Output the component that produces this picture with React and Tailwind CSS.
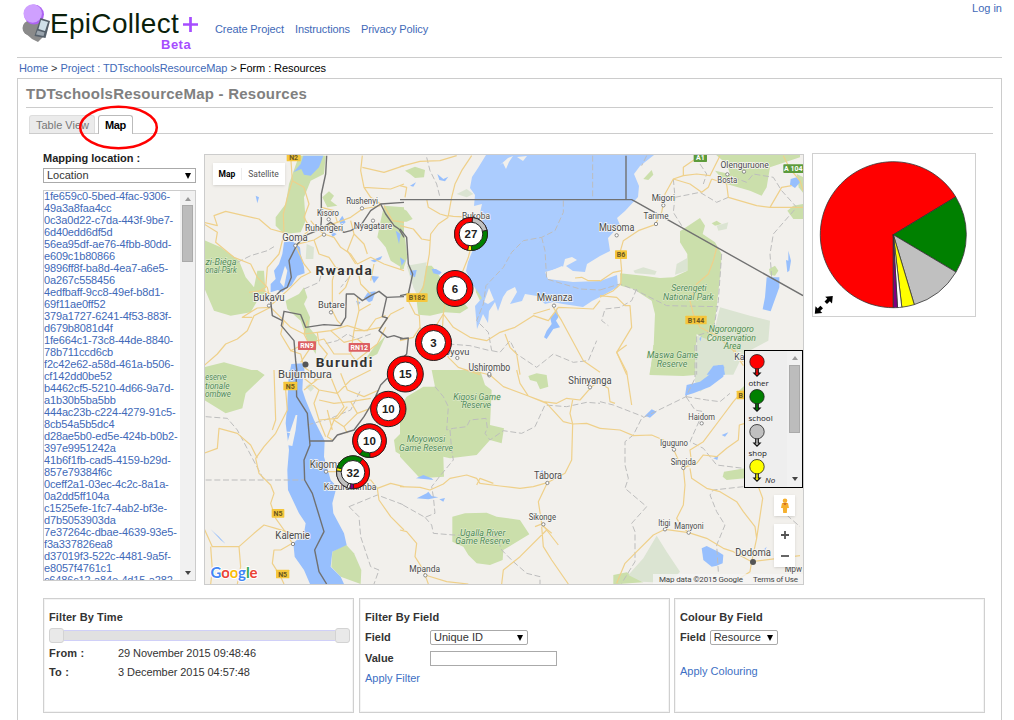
import React from "react";

/* Map artwork: each sheet covers a 200px-wide area, drawn at three units per pixel. */
const SHEETS = [
  {
    x: 204, y: 154,
    parks: [
      "M285 5L365 5L360 60L320 80L300 130L305 200L290 235L240 240L215 215L215 190L245 150L255 90Z",
      "M0 258L50 280L105 320L125 370L150 400L160 350L180 350L185 420L160 440L140 475L80 485L30 470L0 400Z",
      "M355 130L375 112L390 125L380 140L400 155L370 160Z",
      "M540 155L600 160L600 345L560 320L545 280L520 250L530 200Z",
      "M245 440L285 420L300 400L310 430L300 450L318 490L315 520L340 550L335 600L310 560L290 500L250 465Z",
      "M510 580L545 545L520 600L480 620Z",
      "M0 640L60 625L150 650L170 662L0 662Z",
    ],
    pale: ["M308 270L330 280L328 315L305 315Z"],
    water: [
      "M298 5L358 5L345 40L320 65L300 62L292 45L268 55L290 30Z",
      "M240 265L265 262L288 280L290 300L300 340L302 358L280 365L262 395L245 405L235 415L222 408L200 415L200 390L215 375L210 350L225 330L235 300Z",
      "M492 415L515 412L505 440L495 445L480 432Z",
      "M262 630L300 628L302 662L256 662Z",
      "M415 185L425 205L412 215L405 200Z",
      "M380 232L398 240L385 250Z",
      "M500 320L535 306L530 316L512 325Z",
      "M500 365L525 368L510 388Z",
      "M575 230L590 240L585 270Z",
      "M456 440L470 445L462 455Z",
      "M155 125L165 130L160 148Z",
    ],
    land: ["M243 335L250 350L240 400L228 385Z"],
    roads: [
      "M260 5L265 80L250 130L238 180L240 240L225 300L190 340L185 400L160 415",
      "M0 205L40 215L30 185L65 172L120 185L165 195L200 225L237 235",
      "M0 210L40 235L35 265L90 310L140 330L160 370L190 400L200 445",
      "M265 80L300 100L315 150L300 190L320 225L280 260",
      "M200 460L150 485L130 530L100 555L65 570L40 600L0 635",
      "M200 460L160 462L115 490L145 490M200 420L175 410L135 415",
      "M275 272L330 258L360 240L340 225L320 200M330 258L345 300L375 310L395 340L440 360",
      "M360 240L390 250L410 280L440 300L460 330L500 310L540 330L600 350",
      "M395 340L385 380L385 470L400 500L415 515M440 360L425 400L405 420",
      "M475 5L470 50L480 100L500 130L530 150M475 40L540 55L600 35M480 100L560 105L600 90",
      "M352 160L390 170L400 205L370 215M400 205L440 190L475 165L530 155",
      "M440 200L450 240L430 290L455 330M450 240L480 270L490 300",
      "M275 275L300 330L320 355L290 370L250 410L205 450",
      "M200 460L240 500L260 520L300 540L340 535L380 530L430 515L480 530L530 520L560 480L600 460",
      "M240 500L230 540L260 590L290 600L300 640L330 660M300 540L320 580L290 625M340 535L345 570L370 600L350 630",
      "M460 430L465 470L450 530L440 600L455 620L520 570L545 520M380 530L420 565L460 555L490 580",
      "M260 590L300 570L360 555L390 600L440 600",
      "M540 155L565 200L600 205M460 340L470 390L500 420",
      "M450 530L490 530L515 495L545 485M300 540L310 500",
      "M500 380L510 330M465 470L500 450",
    ],
    dashed: ["M100 325L140 305L190 290L210 278", "M300 405L345 385L355 350", "M500 540L460 555L430 540L400 560L360 570", "M430 345L435 370L410 400"],
    borders: [
      "M368 5L365 60L352 120L352 200L350 225L310 242L280 270L255 320L262 370L250 400L230 410L200 440L205 485L235 500L232 515L270 560L275 620L280 662",
      "M350 225L380 205L420 235L440 230L470 215L500 170L530 150L600 145",
      "M530 150L545 180L570 215L585 225L600 250",
      "M235 500L240 472L290 482L305 520L360 512L410 515L425 490L427 420L450 420L475 440L500 425L525 412L548 430L600 428",
      "M548 430L535 488L550 492L525 530L550 550L570 545L600 555",
    ],
    labels: [
      ["Rushenyi", 474, 151, 30, 95], ["Kisoro", 372, 186, 30, 66], ["Ruhengeri", 360, 230, 32, 114], ["Nyagatare", 507, 225, 33, 115],
      ["Goma", 273, 262, 37, 76], ["Bukavu", 195, 442, 36, 94], ["Butare", 382, 462, 34, 80],
    ],
    big: [["Rwanda", 419, 362, 169], ["Burundi", 420, 638, 170]],
    green: [["zi-Biéga", 51, 333, 93], ["onal-Park", 51, 358, 94]],
    dots: [[474, 163], [374, 196], [360, 242], [507, 200], [274, 275], [195, 455], [381, 475]],
    shields: [["N2", 269, 9, 42, "y"], ["RN9", 309, 575, 54, "r"], ["RN12", 466, 580, 64, "r"]],
  },
  {
    x: 400, y: 154,
    parks: [
      "M15 50L45 38L75 48L72 70L45 72L30 60Z", "M0 160L20 170L38 195L20 203L0 203Z", "M0 230L15 250L22 310L10 345L0 345Z",
      "M70 335L95 335L108 350L120 370L150 372L185 440L205 462L180 478L135 475L90 485L55 482L50 440Z", "M225 390L240 400L252 430L240 440L228 415Z",
    ],
    pale: ["M20 335L80 325L70 390L55 430L40 400Z", "M170 120L200 105L220 120L200 130Z"],
    water: [
      "M112 60L130 75L145 68L135 82L118 78Z", "M30 95L48 85L40 98Z", "M95 345L108 345L125 355L118 362L100 358Z",
      "M470 462L475 490L468 500L480 520L460 525L440 555L432 550L440 530L455 510L450 490L462 480Z",
      "M30 350L50 348L45 370L30 362Z", "M0 310L15 320L5 335Z",
    ],
    roads: [
      "M0 38L60 22L120 20L170 5M215 5L185 50L165 90L155 130L145 185L160 187L220 190M80 135L85 160L120 180L145 187",
      "M0 215L40 225L65 255L92 260M145 190L115 210L92 240L88 300L70 400L50 430",
      "M50 430L25 440L45 480L58 485L60 520L80 560L130 480L135 445L185 360L205 310L210 290",
      "M130 480L160 520L210 550L260 560L300 535L345 520L400 485L445 500L475 460L520 462L580 465L600 440",
      "M460 460L485 500L550 620L600 655M315 540L330 580L350 600L360 662M130 480L125 560L145 610L175 640L240 662",
      "M0 95L20 100L15 130M0 560L40 550L60 520M525 372L545 370L565 380L600 380M400 480L450 465",
    ],
    dashed: [
      "M578 5L578 135M490 140L490 175L465 230L425 250L370 260L335 295L310 340L258 395L250 450L230 500L265 535L275 590",
      "M425 250L435 290L440 375L490 390L540 405L600 408",
      "M80 10L90 50L110 90L120 130M275 590L300 595L330 560L350 600L410 640L460 600L520 625L565 620L590 560",
      "M145 570L210 575L270 590",
    ],
    borders: ["M0 137L600 137", "M0 225L20 250L25 330L38 360L25 420L0 425", "M0 555L25 552L20 600L0 620"],
    labels: [["Bukoba", 228, 194, 32, 84], ["Mwanza", 464, 442, 38, 108], ["Uyovu", 170, 602, 34, 76], ["Ushirombo", 268, 650, 35, 125]],
    dots: [[462, 455], [172, 612], [268, 664]],
    shields: [["B182", 51, 431, 64, "y"]],
  },
  {
    x: 600, y: 154,
    parks: [
      "M345 0L600 0L600 10L510 40L500 100L485 125L450 110L380 90L345 50L390 60L380 30Z",
      "M240 232L300 192L315 215L308 240L345 265L365 300L360 370L350 460L340 540L320 560L290 540L285 662L148 662L160 600L165 480L155 440L100 405L62 395L60 358L130 365L180 372L220 370L262 350L262 300L240 265Z",
      "M130 75L155 48L160 62L145 78Z", "M335 208L350 200L365 210L345 215Z", "M562 170L580 155L609 150L609 195L580 195Z",
      "M507 345L525 335L535 350L525 365L510 362Z", "M590 60L612 70L612 120L596 100Z",
    ],
    pale: [
      "M230 330L262 312L262 350L225 362Z", "M350 215L385 205L380 225L355 230Z", "M100 350L130 340L170 352L165 362L105 358Z",
      "M360 460L450 485L510 500L505 560L430 600L400 662L285 662L292 545L335 560Z",
    ],
    water: [
      "M565 290L573 320L568 350L562 355L558 318L565 320Z", "M500 370L538 370L538 400L512 472L488 466L495 430Z",
      "M572 75L590 70L600 85L585 102L570 92Z", "M320 662L340 635L370 632L375 662Z", "M298 555L305 545L302 562Z",
    ],
    roads: [
      "M0 382L40 355L65 350L60 295L70 260L115 230L165 212L185 175L195 120L220 75L250 65L290 60L330 65L360 5M250 65L250 40L300 5",
      "M0 430L40 410L62 390L65 350M0 425L50 430L75 455L90 455L95 520L50 595L80 662",
      "M335 75L380 90L385 130L470 155L510 160L609 160M510 160L545 100L575 95M550 5L570 45L600 80L609 110",
      "M220 75L270 90L305 115L325 100L335 75M350 282L340 320L325 360L290 390L270 440L280 480L300 520L350 545L400 590L430 635",
    ],
    dashed: [
      "M140 5L125 35M220 75L225 130L220 175L245 215M225 130L300 115L350 145L385 130M300 30L320 60L310 90M400 70L440 85L460 60L520 70L545 110L590 160L520 240L510 300L515 370",
      "M365 300L360 370L355 440L340 530L290 545L290 662M0 408L60 390L110 410L200 455L355 458M110 405L95 440L60 460L15 465L5 500L25 515",
    ],
    borders: ["M0 137L95 137L105 142L609 425M78 137L78 5"],
    labels: [["Olenguruone", 434, 43, 31, 145], ["Bosta", 382, 87, 30, 60], ["Migori", 190, 141, 32, 70], ["Tarime", 168, 195, 31, 75], ["Musoma", 50, 232, 35, 106], ["Ka", 418, 617, 32, 30]],
    green: [["Serengeti", 267, 412, 106], ["National Park", 265, 437, 152], ["Ngorongoro", 394, 534, 136], ["Conservation", 394, 560, 148], ["Area", 397, 584, 52], ["Maswa Game", 218, 613, 154], ["Reserve", 216, 639, 92]],
    dots: [[382, 61], [432, 53], [190, 154], [168, 210], [50, 244]],
    shields: [["B6", 63, 302, 36, "y"], ["B144", 288, 498, 64, "y"], ["A1", 301, 11, 40, "g"], ["A 104", 580, 44, 60, "g"]],
  },
  {
    x: 204, y: 370,
    parks: ["M0 0L160 0L182 15L125 70L115 115L65 130L0 90Z", "M385 545L425 523L450 550L472 600L470 642L410 620L382 590Z", "M570 210L600 180L600 260L575 245Z"],
    pale: ["M305 50L320 38L330 55L320 65Z"],
    water: [
      "M255 0L298 0L295 60L305 90L330 150L362 212L360 260L380 330L398 350L385 400L388 430L420 490L428 525L385 545L380 590L410 620L420 642L318 642L300 600L272 560L268 520L300 490L305 460L285 430L252 360L250 300L255 240L245 160L250 100Z",
      "M20 478L45 500L65 522L50 510Z",
    ],
    land: ["M258 185L275 135L280 135L275 180L265 228L248 225L258 190L240 185Z"],
    roads: [
      "M245 60L250 120L215 190L180 230L155 265L165 310L200 345L210 370L200 400L215 445L240 480L265 520L230 540L210 540L205 580L230 620L240 642",
      "M0 250L40 235L45 175L100 190L140 225L160 265M0 475L25 530L105 530L150 490L180 465L215 475L265 490M20 530L25 600L20 642M105 530L110 590L100 642",
      "M210 0L215 150L205 180M300 25L345 60L330 100L345 150L365 200M345 60L400 70L440 30L500 0M400 70L420 110L390 150L370 200L385 210M345 90L390 100L440 95L500 85M440 95L460 130L420 170L390 150M345 150L400 145L430 110M330 30L380 20L400 70M460 130L500 115L520 70M410 10L430 60L480 80L525 60M420 170L430 190M300 60L350 20M370 120L385 180",
      "M370 305L400 305L430 330L500 330L520 355L560 340L600 350M520 355L525 390L560 440L600 480",
    ],
    dashed: ["M5 140L70 145L100 180L180 330M5 330L300 330M310 165L380 145L440 120L470 60M435 410L520 375L600 405M435 410L465 440L470 500L500 590L525 600L510 642"],
    borders: ["M276 0L278 80L310 130L318 225L300 270L302 330L325 370L360 485L332 540L345 605L368 642M318 213L385 213L400 195L450 180L480 140L510 90L530 45L550 25"],
    labels: [["Bujumbura", 303, 25, 37, 162], ["Kigoma", 366, 293, 37, 98], ["Kazuramimba", 438, 360, 32, 158], ["Kalemie", 266, 508, 36, 104]],
    green: [["eserve", 36, 31, 64], ["tionale", 40, 56, 74], ["ombwe", 42, 82, 78]],
    dots: [[366, 305], [267, 522]],
    shields: [["N5", 259, 48, 42, "y"], ["N5", 222, 430, 38, "y"], ["N5", 236, 612, 40, "y"]],
  },
  {
    x: 400, y: 370,
    parks: [
      "M95 0L240 0L255 45L275 60L270 165L312 175L305 220L270 210L230 255L150 265L130 260L132 320L60 325L0 260L0 110L20 80L70 50L105 50Z",
      "M385 18L410 10L440 15L445 50L420 58L410 35L390 30Z", "M157 440L195 430L260 428L290 440L360 450L388 493L310 540L308 570L270 585L230 580L205 555L190 530L157 515Z",
    ],
    water: ["M48 325L70 315L95 325L100 330L80 328Z", "M50 385L80 370L85 365L95 378L115 382L85 388Z", "M118 388L135 384L130 395Z", "M420 305L428 300L430 318Z"],
    roads: [
      "M210 0L270 15L310 50L385 78L440 100L490 155L518 162L560 160L600 175M350 0L360 40L385 78M385 78L430 95L470 100L500 85L540 90L575 50L600 30",
      "M518 90L510 130L518 162L515 270L495 310L442 338L415 395L425 460L440 480L475 525M440 480L360 560L310 600L305 642M425 470L430 530L455 570L505 642M442 338L400 350L360 355L300 348L240 340L230 325L200 315L150 325L130 342L90 360L60 352L0 350M230 345L240 325L280 340M405 470L430 460",
      "M0 480L20 485L50 520L45 560L70 600L85 642M75 615L140 635L205 642M425 465L455 490",
    ],
    dashed: [
      "M105 50L130 80L145 110L140 180L160 175L200 170L210 150L258 145L262 175L255 190L270 210L310 182L365 190L405 170L435 105L500 110L560 97L600 100",
      "M150 180L155 240L160 270L120 318L95 350L100 380L105 430L75 442L0 400M75 442L95 465L100 490L160 495L290 500L305 540L340 575L380 610L420 620L420 642",
    ],
    labels: [["Shinyanga", 570, 41, 35, 130], ["Tabora", 444, 326, 36, 84], ["Sikonge", 427, 450, 32, 82], ["Mpanda", 74, 605, 33, 92]],
    green: [["Kigosi Game", 231, 90, 142], ["Reserve", 229, 115, 88], ["Moyowosi", 78, 217, 116], ["Game Reserve", 78, 242, 162], ["Ugalla River", 248, 497, 136], ["Game Reserve", 248, 521, 164]],
    dots: [[268, 12], [570, 52], [442, 339], [430, 463], [76, 616]],
  },
  {
    x: 600, y: 345,
    parks: ["M160 0L285 0L285 90L250 93L150 90Z", "M372 380L435 370L435 400L380 405L368 395Z", "M40 690L80 682L130 712L40 718Z", "M410 145L435 120L435 140Z"],
    pale: ["M285 0L430 0L380 60L370 90L300 140L285 110Z", "M170 572L200 620L240 680L210 714L125 710L85 690L130 640Z"],
    water: [
      "M260 120L300 110L340 80L355 60L373 65L370 95L330 125L280 145L255 152Z", "M135 212L155 193L170 200L150 218Z",
      "M305 610L320 603L355 620L370 630L368 655L350 662L335 665L310 645Z", "M365 270L385 262L375 275Z", "M340 340L355 332L352 345Z", "M485 620L500 605L495 618Z", "M282 318L292 312Z",
    ],
    roads: [
      "M80 0L50 22L80 80L95 180M0 115L25 130L30 170L45 175M0 250L60 255L100 272L155 270L190 285L215 300L235 345L250 368L255 420L250 480L230 520L245 545L266 563",
      "M50 715L75 655L110 620L160 570L195 553L266 563L320 580L370 610L400 620L455 650L600 632",
      "M250 368L290 355L310 330L350 335L380 310L415 285L418 240L435 235M250 368L275 355L270 315L310 290L370 210L400 170L435 130M270 370L275 400L320 430L360 440L410 470L430 500L465 545L470 580L455 650M475 425L488 460L470 580M455 650L450 680L420 700M400 0L412 40L430 50",
    ],
    dashed: [
      "M285 0L285 100L258 155L125 220L100 270L75 290L75 360L85 400L75 430L140 485L95 535L105 560L105 650L65 715M258 155L320 165L360 170L390 145M0 170L40 180L130 215M258 155L285 195L310 200L270 290L310 310L350 360L430 370M430 425L340 435L330 450L350 500L375 540L350 600L355 680M560 510L600 545",
    ],
    labels: [["Haidom", 305, 225, 32, 80], ["Iguguno", 222, 304, 32, 84], ["Singida", 250, 359, 32, 76], ["Itigi", 193, 543, 31, 36], ["Manyoni", 267, 553, 32, 88], ["Dodoma", 459, 634, 37, 107], ["Mpw", 580, 680, 31, 52]],
    dots: [[305, 235], [222, 314], [250, 369], [195, 553], [266, 563]],
    shields: [["B", 422, 150, 24, "y"]],
  },
];

const LAKE_VICTORIA =
  "M486 155L478 168L472 177L470 188L475 195L474 206L482 204L480 213L484 226L478 240L472 252L468 262L466 271L472 284L478 292L482 298L475 306L477 329L483 314L488 323L489 311L495 302L498 311L503 297L507 291L515 287L517 292L510 304L522 301L525 294L537 296L545 304L553 302L563 304L583 307L592 301L600 297L618 287L617 275L600 281L573 282L548 279L545 272L563 267L565 259L572 257L577 260L566 266L573 271L585 272L587 264L600 256L610 251L608 238L620 225L617 218L625 211L638 197L639 186L634 174L640 166L654 155Z";

const ISLANDS = ["M500 165L508 158L513 156L509 162L506 169L503 163Z", "M517 157L527 156L523 161Z", "M548 272L562 266L568 271L573 277L560 279Z", "M484 302L489 288L494 300L488 304Z"];

const SHIELD_FILL = { y: "#f5c63c", r: "#dc5f63", g: "#5d9b3b" };

function Sheet({ s, layer }) {
  return (
    <g transform={`translate(${s.x} ${s.y}) scale(0.33333)`}>
      {layer === "areas" && (
        <>
          {s.parks?.map((d, i) => <path key={i} d={d} fill="#cbdfab" />)}
          {s.pale?.map((d, i) => <path key={i} d={d} fill="#dbe4d2" />)}
        </>
      )}
      {layer === "water" && (
        <>
          {s.water?.map((d, i) => <path key={i} d={d} fill="#97bffd" />)}
          {s.land?.map((d, i) => <path key={i} d={d} fill="#f2f0ec" />)}
        </>
      )}
      {layer === "lines" && (
        <g fill="none" strokeLinejoin="round">
          {s.dashed?.map((d, i) => <path key={i} d={d} stroke="#bdbdbd" strokeWidth="3" strokeDasharray="18 8" />)}
          {s.roads?.map((d, i) => <path key={i} d={d} stroke="#efd08a" strokeWidth="3.6" />)}
          {s.borders?.map((d, i) => <path key={i} d={d} stroke="#717171" strokeWidth="4.2" />)}
        </g>
      )}
      {layer === "labels" && (
        <g textAnchor="middle" fontFamily="Roboto, sans-serif">
          {s.dots?.map(([x, y], i) => <circle key={i} cx={x} cy={y} r="5" fill="#fff" stroke="#777" strokeWidth="2.5" />)}
          {s.shields?.map(([t, x, y, w, k], i) => (
            <g key={i}>
              <rect x={x - w / 2} y={y - 13} width={w} height="26" rx="2" fill={SHIELD_FILL[k]} />
              <text x={x} y={y + 8} fontSize="21" fontWeight="700" fill={k === "y" ? "#6b5920" : "#fff"}>{t}</text>
            </g>
          ))}
          {s.labels?.map(([t, x, y, size, w], i) => (
            <text key={i} x={x} y={y} fontSize={size * 0.87} textLength={w} lengthAdjust="spacingAndGlyphs" fill="#4a4a4a" stroke="#f7f6f3" strokeWidth="5" paintOrder="stroke">{t}</text>
          ))}
          {s.green?.map(([t, x, y, w], i) => (
            <text key={i} x={x} y={y} fontSize="26" fontStyle="italic" textLength={w} lengthAdjust="spacingAndGlyphs" fill="#4f8a55" stroke="#e3edd3" strokeWidth="3" paintOrder="stroke">{t}</text>
          ))}
          {s.big?.map(([t, x, y, w], i) => (
            <text key={i} x={x} y={y} fontSize="41" fontWeight="700" textLength={w} fill="#333" stroke="#f7f6f3" strokeWidth="5" paintOrder="stroke">{t}</text>
          ))}
        </g>
      )}
    </g>
  );
}

const arcPoint = (cx, cy, r, deg) => {
  const a = ((deg - 90) * Math.PI) / 180;
  return `${(cx + r * Math.cos(a)).toFixed(2)} ${(cy + r * Math.sin(a)).toFixed(2)}`;
};
const wedge = (cx, cy, r, from, to) =>
  `M${cx} ${cy}L${arcPoint(cx, cy, r, from)}A${r} ${r} 0 ${to - from > 180 ? 1 : 0} 1 ${arcPoint(cx, cy, r, to)}Z`;

const CLUSTERS = [
  { n: 27, x: 471, y: 234, r: 16.5, parts: [["#c0c0c0", 5, 77], ["#008000", 77, 178], ["#ffff00", 178, 192], ["#ff0000", 192, 365]] },
  { n: 6, x: 455, y: 288.5, r: 18 },
  { n: 3, x: 433.5, y: 342.5, r: 18 },
  { n: 15, x: 405.3, y: 374, r: 18 },
  { n: 10, x: 388.3, y: 409, r: 17.7 },
  { n: 10, x: 369.5, y: 440.7, r: 16.8, parts: [["#008000", 178, 215], ["#ff0000", 215, 538]] },
  { n: 32, x: 353, y: 472.3, r: 16.5, parts: [["#ff0000", 35, 178], ["#800080", 178, 192], ["#ffffff", 192, 202], ["#c0c0c0", 202, 275], ["#ffff00", 275, 287], ["#008000", 287, 395]] },
];

function Cluster({ c }) {
  return (
    <g>
      <circle cx={c.x} cy={c.y} r={c.r} fill="#f00" stroke="#222" strokeWidth="1" />
      {c.parts?.map(([fill, a, b], i) => (
        <path key={i} d={wedge(c.x, c.y, c.r, a, b)} fill={fill} stroke="#222" strokeWidth="0.8" />
      ))}
      <circle cx={c.x} cy={c.y} r={c.r - (c.parts ? 4.7 : 6)} fill="#fff" stroke="#222" strokeWidth="1" />
      <text x={c.x} y={c.y + 4.2} textAnchor="middle" fontSize="11.5" fontWeight="700" fill="#222" fontFamily="Liberation Sans, sans-serif">{c.n}</text>
    </g>
  );
}

function MapDrawing() {
  return (
    <svg viewBox="205 155 598 429" className="block h-full w-full">
      <rect x="204" y="154" width="600" height="432" fill="#f2f0ec" />
      {SHEETS.map((s, i) => <Sheet key={i} s={s} layer="areas" />)}
      <path d={LAKE_VICTORIA} fill="#abccfe" />
      {ISLANDS.map((d, i) => <path key={i} d={d} fill="#f2f0ec" />)}
      {SHEETS.map((s, i) => <Sheet key={i} s={s} layer="water" />)}
      {SHEETS.map((s, i) => <Sheet key={i} s={s} layer="lines" />)}
      {SHEETS.map((s, i) => <Sheet key={i} s={s} layer="labels" />)}
      <g fill="#555"><circle cx="305.5" cy="364.5" r="3" /><circle cx="753" cy="562" r="3" /></g>
      {CLUSTERS.slice().reverse().map((c, i) => <Cluster key={i} c={c} />)}
      <rect x="653" y="574" width="150" height="11" fill="#f5f5f5" opacity="0.75" />
      <g fontFamily="Roboto, sans-serif" fontSize="8" fill="#444">
        <text x="659" y="581.7" textLength="84">Map data ©2015 Google</text>
        <text x="753" y="581.7" textLength="45">Terms of Use</text>
      </g>
      <text x="210.5" y="578" fontFamily="Lato, sans-serif" fontSize="15" strokeWidth="2" stroke="#fff" paintOrder="stroke" textLength="47" fontWeight="700">
        <tspan fill="#4285f4">G</tspan><tspan fill="#ea4335">o</tspan><tspan fill="#fbbc05">o</tspan><tspan fill="#4285f4">g</tspan><tspan fill="#34a853">l</tspan><tspan fill="#ea4335">e</tspan>
      </text>
    </svg>
  );
}

const IDS = [
  ["1fe659c0-5bed-4fac-9306-", "49a3a8faa4cc"], ["0c3a0d22-c7da-443f-9be7-", "6d40edd6df5d"], ["56ea95df-ae76-4fbb-80dd-", "e609c1b80866"],
  ["9896ff8f-ba8d-4ea7-a6e5-", "0a267c558456"], ["4edfbaff-9cc8-49ef-b8d1-", "69f11ae0ff52"], ["379a1727-6241-4f53-883f-", "d679b8081d4f"],
  ["1fe664c1-73c8-44de-8840-", "78b711ccd6cb"], ["f2c42e62-a58d-461a-b506-", "cf142dd0be52"], ["b4462cf5-5210-4d66-9a7d-", "a1b30b5ba5bb"],
  ["444ac23b-c224-4279-91c5-", "8cb54a5b5dc4"], ["d28ae5b0-ed5e-424b-b0b2-", "397e9951242a"], ["41b6f1fb-cad5-4159-b29d-", "857e79384f6c"],
  ["0ceff2a1-03ec-4c2c-8a1a-", "0a2dd5ff104a"], ["c1525efe-1fc7-4ab2-bf3e-", "d7b5053903da"], ["7e37264c-dbae-4639-93e5-", "f3a337826ea8"],
  ["d37019f3-522c-4481-9a5f-", "e8057f4761c1"], ["c6486c12-a84e-4d15-a282-", ""],
];

const Arrow = ({ up, className = "" }) => (
  <svg viewBox="0 0 6 4" className={`block h-1 w-1.5 ${className}`}><path d={up ? "M0 4L3 0L6 4Z" : "M0 0H6L3 4Z"} fill="currentColor" /></svg>
);

function Select({ children, className }) {
  return (
    <div className={`flex items-center justify-between border border-[#aaa] bg-white pl-[3px] pr-1 text-[11px] leading-none text-[#333] ${className}`}>
      <span>{children}</span>
      <svg viewBox="0 0 6 6" className="size-1.5"><path d="M0 0H6L3 6Z" /></svg>
    </div>
  );
}

function Scrollbar({ className, thumb }) {
  return (
    <div className={`flex w-[15px] shrink-0 flex-col items-center bg-[#f1f1f1] ${className}`}>
      <Arrow up className="text-[#999]" />
      <div className={`w-[11px] border border-[#aaa] bg-[#bcbcbc] ${thumb}`} />
      <Arrow className="mt-auto text-[#444]" />
    </div>
  );
}

const Pin = ({ color }) => (
  <svg viewBox="0 0 16 23" className="block h-[23px] w-4 overflow-visible">
    <path d="M6.7 14V19H4.8L8 22.2L11.2 19H9.3V14Z" fill={color} stroke="#111" strokeWidth="1.1" />
    <circle cx="8" cy="7.7" r="7.2" fill={color} stroke="#222" strokeWidth="0.8" />
  </svg>
);

const SLICES = [["#ff0000", 180, 418.8], ["#008000", 58.8, 120.8], ["#c0c0c0", 120.8, 163.3], ["#ffff00", 163.3, 173.3], ["#ffffff", 173.3, 176.7], ["#800080", 176.7, 180]];

function Logo() {
  return (
    <div className="relative flex h-[52px] w-[180px] items-start">
      <svg viewBox="20 2 32 42" className="h-[42px] w-8 shrink-0">
        <path d="M25 23L45 22L44 36L38 42L32 39L24 32Z" fill="#8b8b8b" />
        <circle cx="30" cy="28" r="7.5" fill="#8a8a8a" />
        <circle cx="34" cy="14.5" r="10" fill="#ad63f2" />
        <circle cx="32.7" cy="13.5" r="9.2" fill="#cfa0ff" />
        <path d="M40.5 18L50 21L45.5 38L34.5 36Z" fill="#56606b" />
        <path d="M41 20L48 22L45 31L38.5 29Z" fill="#cfdfe8" />
        <path d="M37.5 30.5L44.5 32.5L43.5 36L36 34.5Z" fill="#9aa4ad" />
      </svg>
      <span className="-ml-[2px] mt-[6px] text-[28px] leading-[32px] tracking-[0.3px] text-[#0b1f0b]">EpiCollect</span>
      <svg viewBox="0 0 15 15" className="ml-[4px] mt-[15px] size-[15px] shrink-0"><path d="M7.5 0V15M0 7.5H15" stroke="#a64dff" strokeWidth="2.7" /></svg>
      <span className="absolute left-[141px] top-[35px] text-[13px] font-bold leading-[15px] tracking-[0.5px] text-[#a64dff]">Beta</span>
    </div>
  );
}

const Panel = ({ children, className = "" }) => (
  <section className={`h-[115px] border border-[#d0d0d0] pl-[5px] pr-[3px] pt-[11px] text-[11px] text-[#333] shadow-[inset_0_0_0_1px_#f4f4f4] ${className}`}>{children}</section>
);

export default function App() {
  return (
    <div className="h-[720px] w-[1014px] overflow-hidden bg-white font-['Liberation_Sans',sans-serif] text-[11px] text-[#222]">
      <header className="ml-[17px] mr-3 flex h-[58px] items-start border-b border-[#ccc] pl-[3px] pt-0.5 text-[#4169b8]">
        <Logo />
        <nav className="ml-[15px] mt-[21px] flex gap-[11px] leading-[13px] tracking-[-0.1px]">
          <span>Create Project</span><span>Instructions</span><span>Privacy Policy</span>
        </nav>
        <span className="ml-auto leading-[13px]">Log in</span>
      </header>
      <div className="ml-[19px] flex h-5 items-center gap-[3px] whitespace-pre tracking-[-0.07px] text-[#4169b8]">
        <span>Home</span><span className="text-[#333]">&gt;</span><span>Project : TDTschoolsResourceMap</span><span className="text-[#333]">&gt;</span><span className="text-black">Form : Resources</span>
      </div>
      <main className="ml-[17px] mr-3 h-[660px] border border-[#ccc] px-2">
        <h1 className="h-[29px] border-b border-[#ccc] pt-[6px] text-[15px] font-bold leading-[18px] tracking-[0.24px] text-[#808080]">TDTschoolsResourceMap - Resources</h1>
        <div className="relative ml-[3px] mt-2 flex h-[18px] items-end gap-[3px] border-b border-[#ccc]">
          <span className="h-[18px] w-[66px] rounded-t-[3px] border border-b-0 border-[#ddd] bg-[#ebebeb] pl-[6px] leading-[19px] text-[#777]">Table View</span>
          <span className="-mb-px h-[19px] w-[35px] rounded-t-[3px] border border-b-0 border-[#bbb] bg-white text-center font-bold leading-[19px] tracking-[-0.3px] text-black">Map</span>
          <svg viewBox="0 0 82 46" className="absolute left-[48px] top-[-12px] h-[46px] w-[82px]"><ellipse cx="41.5" cy="23.5" rx="38.3" ry="20.7" fill="none" stroke="#f00" strokeWidth="2.5" /></svg>
        </div>

        <div className="ml-[17px] mt-[19px] flex items-start">
          <aside className="w-[153px]">
            <div className="h-[15px] font-bold leading-[11px]">Mapping location :</div>
            <Select className="h-[15px] w-[153px]">Location</Select>
            <div className="mt-[7px] flex h-[391px] w-[153px] border border-[#ccc]">
              <div className="h-[389px] flex-1 overflow-hidden whitespace-nowrap leading-3 tracking-[-0.15px] text-[#4169b8]">
                <div className="-mt-px">
                  {IDS.map(([a, b]) => <div key={a}>{a}<br />{b}</div>)}
                </div>
              </div>
              <Scrollbar className="pb-[5px] pt-[6px]" thumb="mt-1 h-[57px]" />
            </div>
          </aside>

          <div className="relative ml-2 mt-[1px] h-[431px] w-[600px] border border-[#ccc]">
            <MapDrawing />
            <div className="absolute left-2 top-2 flex h-[22px] items-center bg-white font-[Roboto,sans-serif] text-[8.5px] shadow-sm">
              <span className="w-[29px] border-r border-[#eee] text-center font-bold text-black">Map</span>
              <span className="w-[43px] text-center text-[#555]">Satellite</span>
            </div>
            <div className="absolute left-[539px] top-[195px] flex h-[138px] w-[59px] overflow-hidden border-[1.5px] border-black bg-[#eee]">
              <div className="flex-1 pl-[2px] pt-[3px] font-['Open_Sans',sans-serif] text-[8px] leading-3 text-[#222]">
                <div className="h-[35px] pl-0.5"><Pin color="#f00" /><span className="-ml-[0.5px]">other</span></div>
                <div className="h-[35px] pl-0.5"><Pin color="#008000" /><span className="-ml-[0.5px]">school</span></div>
                <div className="h-[35px] pl-0.5"><Pin color="#c0c0c0" /><span className="-ml-[0.5px]">shop</span></div>
                <div className="flex items-end pl-0.5"><Pin color="#ff0" /><i className="-mb-1">No</i></div>
              </div>
              <Scrollbar className="pb-[6px] pt-[5px]" thumb="mt-[5px] h-[68px]" />
            </div>
            <div className="absolute left-[569px] top-[340px] flex size-[21px] items-center justify-center bg-white shadow-sm">
              <svg viewBox="0 0 10 15" className="h-[15px] w-2.5"><circle cx="5" cy="2.7" r="2.3" fill="#f5b02e" /><path d="M2 5H8L9 10H7.2L6.8 15H3.2L2.8 10H1Z" fill="#f5b02e" /><path d="M3 5.2L5 7.3L7 5.2Z" fill="#c95d20" /></svg>
            </div>
            <div className="absolute left-[569px] top-[369px] flex h-[43px] w-[21px] flex-col items-center justify-around bg-white shadow-sm">
              <svg viewBox="0 0 8 8" className="size-2"><path d="M4 0V8M0 4H8" stroke="#555" strokeWidth="1.8" /></svg>
              <svg viewBox="0 0 8 8" className="size-2"><path d="M0 4H8" stroke="#555" strokeWidth="1.8" /></svg>
            </div>
          </div>

          <div className="ml-2 h-[164px] w-[164px] border border-[#d0d0d0]">
            <svg viewBox="813 154 162 162" className="block h-[162px] w-[162px]">
              {SLICES.map(([fill, a, b]) => <path key={fill} d={wedge(893.3, 234.7, 73, a, b)} fill={fill} stroke="#333" strokeWidth="0.8" />)}
              <path d="M832.8 296L832 303.5L829.8 301.3L827 304L824.5 301.5L827.3 298.8L825.2 296.7ZM814.8 313.8L815.5 306.3L817.7 308.4L820.4 305.7L823 308.3L820.2 311L822.3 313.1Z" fill="#000" />
            </svg>
          </div>
        </div>

        <div className="ml-[17px] mt-[13px] flex">
          <Panel className="w-[311px]">
            <h2 className="font-bold leading-[15px] tracking-[0.1px]">Filter By Time</h2>
            <div className="mt-0.5 flex h-4 items-center">
              <span className="size-[15px] rounded-[3px] border border-[#d3d3d3] bg-[#e9e9e9]" />
              <span className="h-[11px] flex-1 border-y border-[#d0d0f8] bg-[#e1e1e1]" />
              <span className="size-[15px] rounded-[3px] border border-[#d3d3d3] bg-[#e9e9e9]" />
            </div>
            <div className="mt-px grid grid-cols-[69px_1fr] leading-[19px] tracking-[-0.06px]">
              <b className="tracking-[0.2px]">From :</b><span>29 November 2015 09:48:46</span>
              <b className="tracking-[0.2px]">To :</b><span>3 December 2015 04:57:48</span>
            </div>
          </Panel>
          <Panel className="ml-[5px] w-[311px]">
            <h2 className="font-bold leading-[15px] tracking-[0.1px]">Filter By Field</h2>
            <div className="mt-[5px] grid grid-cols-[65px_1fr] items-center gap-y-[6px] leading-[15px]">
              <b>Field</b><Select className="h-[15px] w-[98px] rounded-[2px]">Unique ID</Select>
              <b>Value</b><input className="h-[15px] w-[127px] border border-[#aaa]" />
            </div>
            <div className="mt-[5px] leading-[15px] text-[#3d6fc4]">Apply Filter</div>
          </Panel>
          <Panel className="ml-1 w-[311px]">
            <h2 className="font-bold leading-[15px] tracking-[0.1px]">Colour By Field</h2>
            <div className="mt-[5px] flex items-center gap-1 leading-[15px]"><b>Field</b><Select className="h-[15px] w-[68px] rounded-[2px]">Resource</Select></div>
            <div className="mt-[19px] leading-[15px] text-[#3d6fc4]">Apply Colouring</div>
          </Panel>
        </div>
      </main>
    </div>
  );
}
